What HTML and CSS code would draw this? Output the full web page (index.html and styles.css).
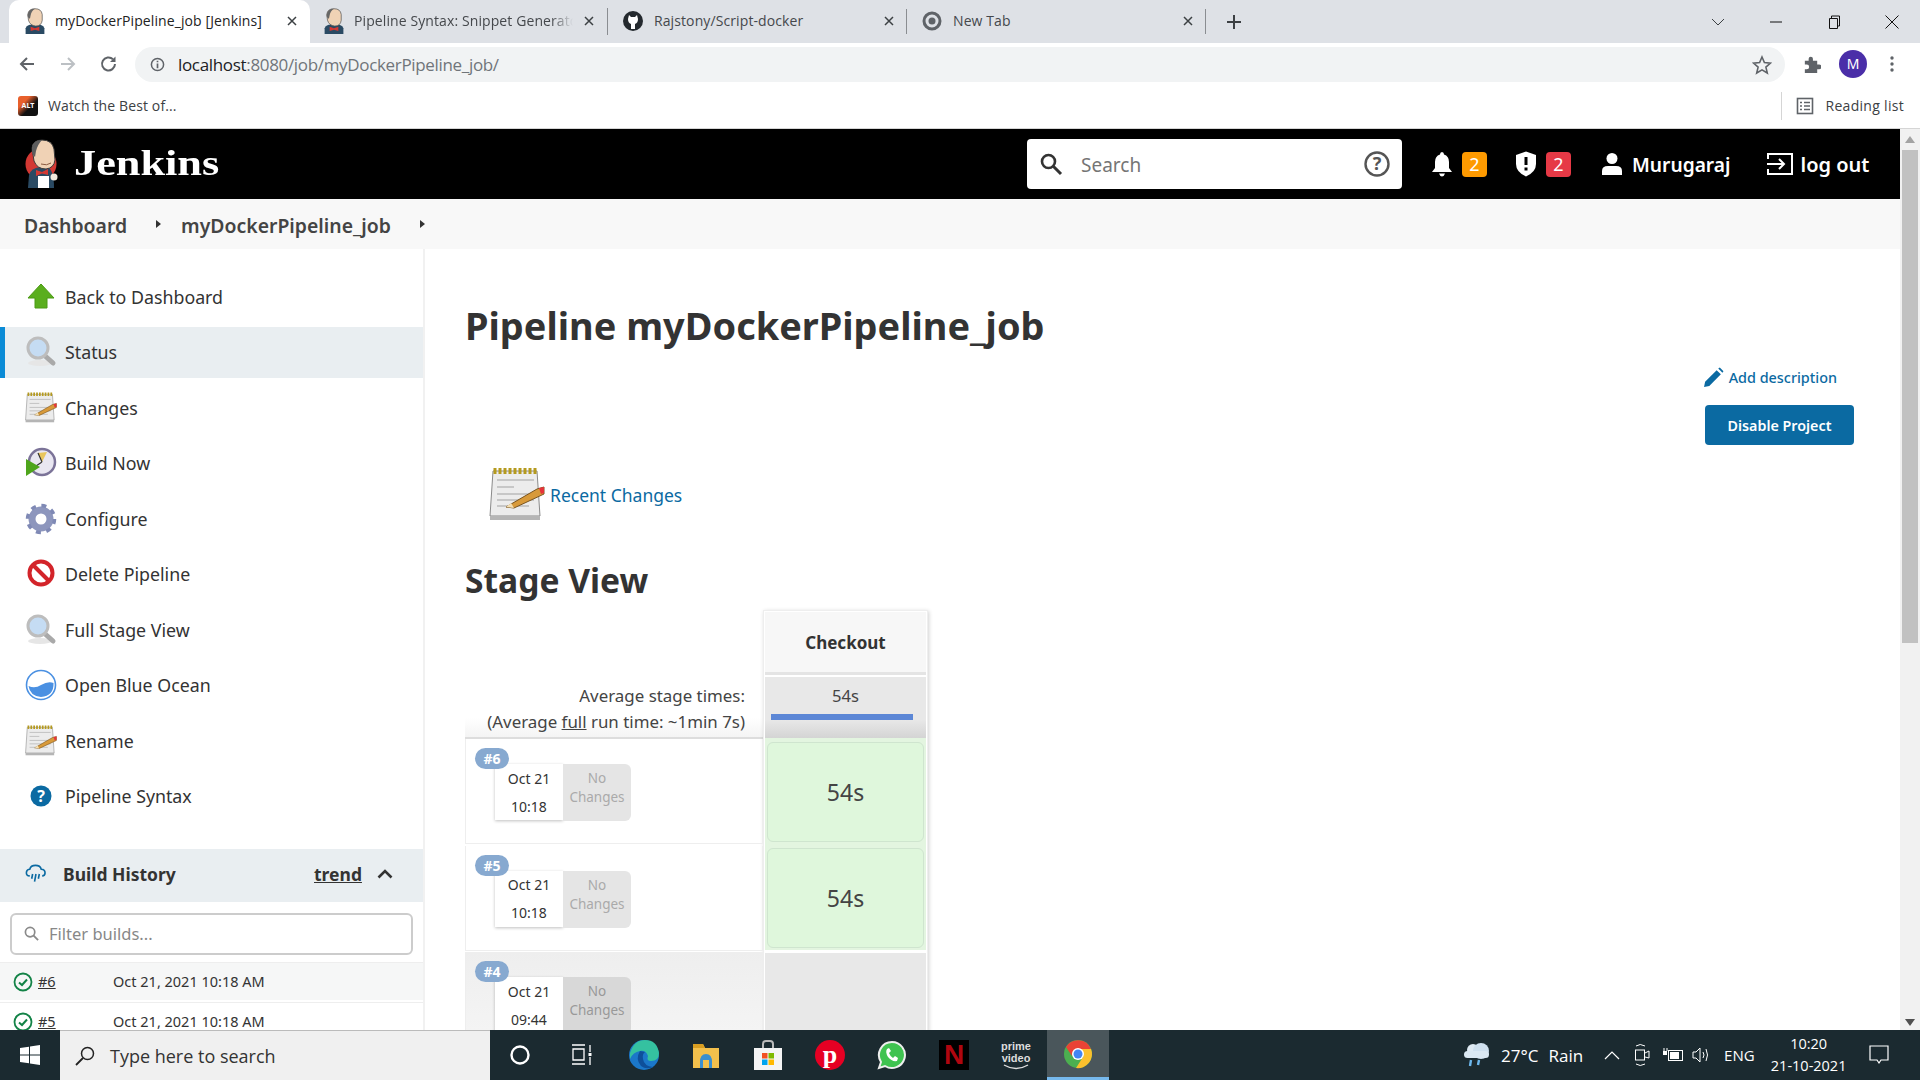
FILE: index.html
```html
<!DOCTYPE html>
<html lang="en">
<head>
    <meta charset="UTF-8">
    <title>myDockerPipeline_job [Jenkins]</title>
    <link rel="stylesheet" href="styles.css">
</head>
<body>

<svg class="defs" width="0" height="0">
    <symbol id="i-butler" viewBox="0 0 40 50">
        <circle cx="18" cy="25" r="15.5" fill="#d33833"/>
        <path d="M5 49 L6 36 Q8 29 17 28 L24 28 Q31 30 31 49Z" fill="#2a4a63"/>
        <path d="M9 9 Q10 1 19 1 Q29 1 31 10 L32 21 Q31 29 23 30 Q14 30 11 22Z" fill="#f0d2b5" stroke="#3a3a3a" stroke-width="1"/>
        <path d="M9 9 Q10 1 19 1 Q15 5 13 12 L12 18 Q8 15 9 9Z" fill="#5d5d5d"/>
        <path d="M18 25 Q24 27 28 24" fill="none" stroke="#8a5a40" stroke-width="1"/>
        <path d="M13 31 L19 33 L25 30 L25 36 L19 34.5 L13 37Z" fill="#d33833"/>
        <rect x="15" y="37" width="11" height="12" fill="#fff"/>
        <circle cx="31" cy="38" r="3.5" fill="#f1e8dc"/>
    </symbol>
    <symbol id="i-butler-small" viewBox="0 0 30 36">
        <path d="M2 36 V28 Q4 23 11 23 H19 Q26 23 28 28 V36Z" fill="#2a4a63"/>
        <path d="M5 9 Q6 1 15 1 Q24 1 25 9 L25 17 Q24 25 16 25 Q8 24 6 17Z" fill="#f0d2b5" stroke="#555" stroke-width="1"/>
        <path d="M5 9 Q6 1 15 1 Q10 4 9 10 L8 15 Q4 13 5 9Z" fill="#666"/>
        <path d="M9 26 L15 28 L21 26 V32 L15 30 L9 32Z" fill="#d33833"/>
    </symbol>
    <symbol id="i-notepad" viewBox="0 0 56 56">
        <path d="M4 4 H48 L51 49 H1Z" fill="#ececec" stroke="#8a8a8a"/>
        <rect x="1" y="49" width="50" height="4" fill="#b5b5b5"/>
        <path d="M6 1 V7 M11 1 V7 M16 1 V7 M21 1 V7 M26 1 V7 M31 1 V7 M36 1 V7 M41 1 V7 M46 1 V7" stroke="#b59a1e" stroke-width="3"/>
        <path d="M8 13 H45 M8 20 H25 M8 27 H45 M8 33 H45 M8 39 H40" stroke="#bbb" stroke-width="1.5"/>
        <path d="M17 40 L48 22 L55 20 L55 27 L25 41 Z" fill="#d89a3a" stroke="#7a5520" stroke-width="1"/>
        <path d="M17 40 L25 41 L22 36Z" fill="#f3dfb5"/>
        <path d="M50 21 L55 20 L55 26 L52 27Z" fill="#e6333a"/>
    </symbol>
    <symbol id="i-lens" viewBox="0 0 32 32">
        <ellipse cx="15" cy="27" rx="12" ry="3" fill="#e6e6e6"/>
        <path d="M19 19 L28 27" stroke="#a9a9a9" stroke-width="5" stroke-linecap="round"/>
        <circle cx="13" cy="12" r="10" fill="#c5dcf3" stroke="#bdbdbd" stroke-width="3"/>
    </symbol>
    <symbol id="i-check" viewBox="0 0 20 20">
        <circle cx="10" cy="10" r="8.5" fill="none" stroke="#138347" stroke-width="1.8"/>
        <path d="M6 10.5 L9 13 L14 7.5" fill="none" stroke="#138347" stroke-width="2"/>
    </symbol>
    <symbol id="i-x" viewBox="0 0 12 12">
        <path d="M2 2 L10 10 M10 2 L2 10" stroke="#3c4043" stroke-width="1.5"/>
    </symbol>
</svg>

<div class="tabstrip">
    <div class="tab tab-active">
        <svg class="tab-icon"><use href="#i-butler-small"/></svg>
        <span class="tab-title">myDockerPipeline_job [Jenkins]</span>
        <svg class="tab-close"><use href="#i-x"/></svg>
    </div>
    <div class="tab tab-second">
        <svg class="tab-icon"><use href="#i-butler-small"/></svg>
        <span class="tab-title tab-fade">Pipeline Syntax: Snippet Generator</span>
        <svg class="tab-close"><use href="#i-x"/></svg>
    </div>
    <div class="tab tab-sep">
        <svg class="tab-icon" viewBox="0 0 20 20"><circle cx="10" cy="10" r="10" fill="#24292e"/><path d="M6 4 L8 6 H12 L14 4 L15 8 Q15 12 12 13 L12 18 H8 L8 13 Q5 12 5 8Z" fill="#fff"/></svg>
        <span class="tab-title">Rajstony/Script-docker</span>
        <svg class="tab-close"><use href="#i-x"/></svg>
    </div>
    <div class="tab tab-sep">
        <svg class="tab-icon" viewBox="0 0 20 20"><circle cx="10" cy="10" r="8" fill="none" stroke="#5f6368" stroke-width="3"/><circle cx="10" cy="10" r="3.5" fill="#5f6368"/></svg>
        <span class="tab-title">New Tab</span>
        <svg class="tab-close"><use href="#i-x"/></svg>
    </div>
    <svg class="tab-new" viewBox="0 0 16 16"><path d="M8 1 V15 M1 8 H15" stroke="#3c4043" stroke-width="2"/></svg>
    <div class="win-controls">
        <svg class="win-btn" viewBox="0 0 14 14"><path d="M1 4 L7 10 L13 4" fill="none" stroke="#3c4043"/></svg>
        <svg class="win-btn" viewBox="0 0 14 14"><path d="M1 7 H13" stroke="#111"/></svg>
        <svg class="win-btn" viewBox="0 0 14 14"><path d="M2.5 3.5 H10.5 V13.5 H2.5Z M4.5 3 V1 H12.5 V11 H11" fill="none" stroke="#111"/></svg>
        <svg class="win-btn" viewBox="0 0 14 14"><path d="M0.5 0.5 L13.5 13.5 M13.5 0.5 L0.5 13.5" stroke="#111"/></svg>
    </div>
</div>

<div class="toolbar">
    <svg class="nav-btn" viewBox="0 0 18 18"><path d="M16 9 H3 M9 3 L3 9 L9 15" fill="none" stroke="#5f6368" stroke-width="2"/></svg>
    <svg class="nav-btn" viewBox="0 0 18 18"><path d="M2 9 H15 M9 3 L15 9 L9 15" fill="none" stroke="#bcc0c4" stroke-width="2"/></svg>
    <svg class="nav-btn" viewBox="0 0 18 18"><path d="M15 9 A6.5 6.5 0 1 1 13 4.2" fill="none" stroke="#5f6368" stroke-width="2"/><path d="M15.5 1.5 V7 H10Z" fill="#5f6368"/></svg>
    <div class="omnibox">
        <svg class="omni-info" viewBox="0 0 16 16"><circle cx="8" cy="8" r="6.5" fill="none" stroke="#5f6368" stroke-width="1.6"/><path d="M8 7 V12 M8 4 V5.6" stroke="#5f6368" stroke-width="1.8"/></svg>
        <span class="omni-url"><b>localhost</b>:8080/job/myDockerPipeline_job/</span>
        <svg class="omni-star" viewBox="0 0 20 20"><path d="M10 2 L12.4 7.6 L18.5 8.1 L13.9 12.1 L15.3 18 L10 14.9 L4.7 18 L6.1 12.1 L1.5 8.1 L7.6 7.6Z" fill="none" stroke="#5f6368" stroke-width="1.6"/></svg>
    </div>
    <svg class="ext-icon" viewBox="0 0 20 20"><path d="M3 6 H7 V4 A2.2 2.2 0 0 1 11.5 4 V6 H16 V10 H18 A2.2 2.2 0 0 1 18 15 H16 V19 H3 V15 H5 A2.3 2.3 0 0 0 5 10 H3Z" fill="#5f6368"/></svg>
    <span class="avatar">M</span>
    <svg class="menu-dots" viewBox="0 0 4 18"><circle cx="2" cy="3" r="1.7" fill="#5f6368"/><circle cx="2" cy="9" r="1.7" fill="#5f6368"/><circle cx="2" cy="15" r="1.7" fill="#5f6368"/></svg>
</div>

<div class="bookmarks">
    <span class="alt-icon">ALT</span>
    <span class="bookmark-label">Watch the Best of...</span>
    <span class="reading">
        <svg class="reading-icon" viewBox="0 0 18 18"><rect x="1.5" y="1.5" width="15" height="15" fill="none" stroke="#5f6368" stroke-width="1.6"/><path d="M4 5.5 H6 M8 5.5 H14 M4 9 H6 M8 9 H14 M4 12.5 H6 M8 12.5 H14" stroke="#5f6368" stroke-width="1.4"/></svg>
        Reading list
    </span>
</div>

<div class="viewport">
    <div class="page">
        <header class="jenkins-head">
            <svg class="butler"><use href="#i-butler"/></svg>
            <span class="brand"><span class="brand-text">Jenkins</span></span>
            <div class="search-box">
                <svg class="search-icon" viewBox="0 0 24 24"><circle cx="9.5" cy="9.5" r="6.5" fill="none" stroke="#333" stroke-width="2.6"/><path d="M14.5 14.5 L22 22" stroke="#333" stroke-width="3"/></svg>
                <span class="search-text">Search</span>
                <svg class="search-help" viewBox="0 0 26 26"><circle cx="13" cy="13" r="11.5" fill="none" stroke="#555" stroke-width="2.4"/><text x="13" y="19" text-anchor="middle" class="search-help-q">?</text></svg>
            </div>
            <svg class="head-icon bell" viewBox="0 0 22 26"><path d="M11 1 Q13 1 13 3.5 Q18 5 18 11 V17 L21 21 H1 L4 17 V11 Q4 5 9 3.5 Q9 1 11 1Z M8 22.5 H14 Q13 25.5 11 25.5 Q9 25.5 8 22.5Z" fill="#fff"/></svg>
            <span class="badge badge-warn">2</span>
            <svg class="head-icon shield" viewBox="0 0 22 26"><path d="M11 0.5 L21 4 V13 Q21 21 11 25.5 Q1 21 1 13 V4Z" fill="#fff"/><path d="M11 6 V14 M11 16.5 V19.5" stroke="#000" stroke-width="3"/></svg>
            <span class="badge badge-danger">2</span>
            <svg class="head-icon person" viewBox="0 0 22 24"><circle cx="11" cy="6.5" r="5.5" fill="#fff"/><path d="M1 23 V19 Q1 14 7 14 H15 Q21 14 21 19 V23Z" fill="#fff"/></svg>
            <span class="head-link user-link">Murugaraj</span>
            <svg class="head-icon logout" viewBox="0 0 28 24"><path d="M2 7 V2 H26 V22 H2 V17" fill="none" stroke="#fff" stroke-width="2"/><path d="M1 12 H18 M13 7 L18 12 L13 17" fill="none" stroke="#fff" stroke-width="2"/></svg>
            <span class="head-link logout-link">log out</span>
        </header>

        <nav class="breadcrumbs">
            <span class="crumb">Dashboard</span>
            <span class="crumb-arrow crumb-arrow-1"></span>
            <span class="crumb">myDockerPipeline_job</span>
            <span class="crumb-arrow"></span>
        </nav>

        <div class="columns">
            <aside class="sidebar">
                <ul class="side-tasks">
                    <li class="task">
                        <svg class="task-icon" viewBox="0 0 32 32"><path d="M16 3 L29 17 H22 V27 H10 V17 H3Z" fill="#5aae1e" stroke="#4b9a14" stroke-width="1"/></svg>
                        Back to Dashboard
                    </li>
                    <li class="task task-current">
                        <svg class="task-icon"><use href="#i-lens"/></svg>
                        Status
                    </li>
                    <li class="task">
                        <svg class="task-icon"><use href="#i-notepad"/></svg>
                        Changes
                    </li>
                    <li class="task">
                        <svg class="task-icon" viewBox="0 0 32 32"><circle cx="17" cy="15" r="13" fill="#e9e7f1" stroke="#7b7398" stroke-width="2.5"/><path d="M17 15 L13 6 L22 5Z" fill="#e9c65c"/><path d="M17 15 L13 6 M17 15 L11 19" stroke="#333" stroke-width="1.2"/><path d="M1 12 V29 L15 20Z" fill="#4ea51c"/></svg>
                        Build Now
                    </li>
                    <li class="task">
                        <svg class="task-icon" viewBox="0 0 32 32"><circle cx="16" cy="16" r="9" fill="none" stroke="#8d96bd" stroke-width="7"/><circle cx="16" cy="16" r="13.5" fill="none" stroke="#7f89b5" stroke-width="3.5" stroke-dasharray="5 5.6"/></svg>
                        Configure
                    </li>
                    <li class="task">
                        <svg class="task-icon" viewBox="0 0 32 32"><circle cx="16" cy="15" r="11.5" fill="#fff" stroke="#d3242a" stroke-width="4"/><path d="M8 7 L24 23" stroke="#d3242a" stroke-width="4"/></svg>
                        Delete Pipeline
                    </li>
                    <li class="task">
                        <svg class="task-icon"><use href="#i-lens"/></svg>
                        Full Stage View
                    </li>
                    <li class="task">
                        <svg class="task-icon" viewBox="0 0 32 32"><circle cx="16" cy="16" r="14.5" fill="#fff" stroke="#4a90e2" stroke-width="1.6"/><path d="M3.5 17 Q10 20 16 16 Q23 12 28.5 14 Q29 27 16 28 Q5 27 3.5 17Z" fill="#4a90e2"/></svg>
                        Open Blue Ocean
                    </li>
                    <li class="task">
                        <svg class="task-icon"><use href="#i-notepad"/></svg>
                        Rename
                    </li>
                    <li class="task">
                        <svg class="task-icon" viewBox="0 0 32 32"><circle cx="16" cy="16" r="10.5" fill="#0b6aa2"/><text x="16" y="21.5" text-anchor="middle" class="help-q">?</text></svg>
                        Pipeline Syntax
                    </li>
                </ul>

                <div class="history-head">
                    <svg class="history-icon" viewBox="0 0 22 20"><path d="M5 12 Q1 12 1.5 8 Q2 5 5 5 Q6 1 11 1 Q16 1 17 5 Q21 5 21 9 Q21 12 18 12" fill="none" stroke="#0b6aa2" stroke-width="1.7"/><path d="M8 10 L7 15 M11.5 10 L10 18 M15 10 L14 15" stroke="#0b6aa2" stroke-width="1.7"/></svg>
                    <span class="history-title">Build History</span>
                    <span class="history-trend">trend</span>
                    <svg class="history-chevron" viewBox="0 0 16 10"><path d="M1.5 8.5 L8 2 L14.5 8.5" fill="none" stroke="#333" stroke-width="2.6"/></svg>
                </div>
                <div class="history-filter">
                    <svg class="filter-icon" viewBox="0 0 16 16"><circle cx="6.5" cy="6.5" r="5" fill="none" stroke="#8a8a8a" stroke-width="1.8"/><path d="M10 10 L15 15" stroke="#8a8a8a" stroke-width="2"/></svg>
                    <span>Filter builds...</span>
                </div>
                <div class="build-row build-row-odd">
                    <svg class="build-status"><use href="#i-check"/></svg>
                    <span class="build-num">#6</span>
                    <span class="build-date">Oct 21, 2021 10:18 AM</span>
                </div>
                <div class="build-row">
                    <svg class="build-status"><use href="#i-check"/></svg>
                    <span class="build-num">#5</span>
                    <span class="build-date">Oct 21, 2021 10:18 AM</span>
                </div>
            </aside>

            <main class="content">
                <h1 class="job-title">Pipeline myDockerPipeline_job</h1>

                <div class="job-actions">
                    <span class="add-desc">
                        <svg class="add-desc-icon" viewBox="0 0 20 20"><path d="M1 19 L2 14 L13 3 L17 7 L6 18Z M14.5 1.5 L16 0.5 L19.5 4 L18.5 5.5Z" fill="#0b6aa2"/></svg>
                        Add description
                    </span>
                    <button class="btn-disable">Disable Project</button>
                </div>

                <div class="recent-changes">
                    <svg class="recent-icon"><use href="#i-notepad"/></svg>
                    <span class="recent-link">Recent Changes</span>
                </div>

                <h2 class="stage-title">Stage View</h2>

                <div class="stage">
                    <div class="stage-left">
                        <div class="stage-avg">
                            <div>Average stage times:</div>
                            <div>(Average <u>full</u> run time: ~1min 7s)</div>
                        </div>
                        <div class="run">
                            <span class="run-badge">#6</span>
                            <div class="run-date"><span>Oct 21</span><span>10:18</span></div>
                            <div class="run-changes">No Changes</div>
                        </div>
                        <div class="run">
                            <span class="run-badge">#5</span>
                            <div class="run-date"><span>Oct 21</span><span>10:18</span></div>
                            <div class="run-changes">No Changes</div>
                        </div>
                        <div class="run run-grey">
                            <span class="run-badge">#4</span>
                            <div class="run-date"><span>Oct 21</span><span>09:44</span></div>
                            <div class="run-changes">No Changes</div>
                        </div>
                    </div>
                    <div class="stage-col">
                        <div class="col-head">Checkout</div>
                        <div class="col-avg">
                            <span>54s</span>
                            <div class="col-bar"></div>
                        </div>
                        <div class="cell"><div class="cell-ok">54s</div></div>
                        <div class="cell"><div class="cell-ok">54s</div></div>
                        <div class="cell cell-empty"></div>
                    </div>
                </div>
            </main>
        </div>
    </div>

    <div class="scrollbar">
        <span class="scroll-up"></span>
        <div class="scroll-thumb"></div>
        <span class="scroll-down"></span>
    </div>
</div>

<footer class="taskbar">
    <div class="start">
        <svg class="start-logo" viewBox="0 0 20 20"><path d="M0 3 L9 1.7 V9.5 H0Z M10 1.5 L20 0 V9.5 H10Z M0 10.5 H9 V18.3 L0 17Z M10 10.5 H20 V20 L10 18.5Z" fill="#fff"/></svg>
    </div>
    <div class="task-search">
        <svg class="task-search-icon" viewBox="0 0 20 20"><circle cx="12.5" cy="7.5" r="6" fill="none" stroke="#222" stroke-width="1.5"/><path d="M8 12 L1 19" stroke="#222" stroke-width="1.8"/></svg>
        Type here to search
    </div>
    <div class="task-apps">
        <div class="app"><svg class="app-icon" viewBox="0 0 30 30"><circle cx="15" cy="15" r="8.5" fill="none" stroke="#fff" stroke-width="2.4"/></svg></div>
        <div class="app"><svg class="app-icon" viewBox="0 0 30 30"><path d="M5 5 H18 M5 24 H18 M6 9 H17 V20 H6Z M23 5 V12 M23 17 V25" fill="none" stroke="#fff" stroke-width="1.3"/><rect x="21.5" y="13" width="3" height="3" fill="#fff"/></svg></div>
        <div class="app"><svg class="app-icon app-icon-lg" viewBox="0 0 32 32"><circle cx="16" cy="16" r="15" fill="#1b77c9"/><path d="M2 14 Q6 1 17 1 Q29 1 31 14 Q31 22 23 22 Q18 22 20 17 Q18 11 12 12 Q5 13 2 20Z" fill="#35c1a0"/><path d="M12 12 Q7 20 13 27 Q18 31 25 28 Q16 27 15 20 Q14 15 17 13Z" fill="#0e4f9a"/></svg></div>
        <div class="app"><svg class="app-icon" viewBox="0 0 30 30"><path d="M2 4 H12 L14 8 H28 V28 H2Z" fill="#f3c04c"/><path d="M2 4 H12 L14 8 H2Z" fill="#d99e21"/><path d="M9 22 Q9 14 15 14 Q21 14 21 22 V28 H18 V20 H12 V28 H9Z" fill="#3a8fd1"/></svg></div>
        <div class="app"><svg class="app-icon" viewBox="0 0 30 30"><path d="M10 9 V4 Q10 1 13 1 H17 Q20 1 20 4 V9" fill="none" stroke="#bbb" stroke-width="2"/><path d="M1 8 H29 V30 H1Z" fill="#f4f4f4"/><rect x="9" y="13" width="5.5" height="5.5" fill="#f25022"/><rect x="15.5" y="13" width="5.5" height="5.5" fill="#7fba00"/><rect x="9" y="19.5" width="5.5" height="5.5" fill="#00a4ef"/><rect x="15.5" y="19.5" width="5.5" height="5.5" fill="#ffb900"/></svg></div>
        <div class="app"><svg class="app-icon" viewBox="0 0 30 30"><circle cx="15" cy="15" r="15" fill="#e60023"/><text x="15" y="23" text-anchor="middle" class="pin-p">p</text></svg></div>
        <div class="app"><svg class="app-icon" viewBox="0 0 30 30"><path d="M15 2 A13 13 0 1 1 8 26 L2 28 L4 22 A13 13 0 0 1 15 2Z" fill="#3fc350" stroke="#eee" stroke-width="2"/><path d="M10 9 Q8 12 11 17 Q15 22 20 21 L21 18 L18 16 L16 18 Q13 16 12 13 L14 11 L12 8Z" fill="#fff"/></svg></div>
        <div class="app"><span class="netflix">N</span></div>
        <div class="app prime">
            <span>prime<br>video</span>
            <svg class="prime-smile" viewBox="0 0 26 6"><path d="M1 1 Q13 8 25 1" fill="none" stroke="#ddd" stroke-width="1.4"/></svg>
        </div>
        <div class="app app-active"><svg class="app-icon" viewBox="0 0 30 30"><circle cx="15" cy="15" r="14" fill="#4caf50"/><path d="M3 8 A14 14 0 0 1 28 10 H15 A6 6 0 0 0 9 17Z" fill="#ea4335"/><path d="M28 10 A14 14 0 0 1 13 29 L20 18 A6 6 0 0 0 15 10Z" fill="#fbc02d"/><circle cx="15" cy="15" r="6" fill="#fff"/><circle cx="15" cy="15" r="4.5" fill="#4285f4"/></svg></div>
    </div>
    <div class="tray">
        <svg class="tray-weather" viewBox="0 0 30 28"><circle cx="12" cy="9" r="6" fill="#dfeaf3"/><circle cx="20" cy="10" r="8" fill="#cfe0ee"/><rect x="3" y="10" width="25" height="7" rx="3.5" fill="#dbe8f2"/><path d="M10 19 L9 25 M18 19 L17 24" stroke="#6db8ee" stroke-width="2.4"/></svg>
        <span class="tray-temp">27°C</span>
        <span class="tray-rain">Rain</span>
        <svg class="tray-up" viewBox="0 0 16 10"><path d="M1 9 L8 2 L15 9" fill="none" stroke="#fff" stroke-width="1.2"/></svg>
        <svg class="tray-cam" viewBox="0 0 16 24"><path d="M2 3 Q6 0 11 3 M2 21 Q6 24 11 21" fill="none" stroke="#fff"/><rect x="1.5" y="7" width="9" height="10" fill="none" stroke="#fff"/><path d="M11 10 L15 8 V15 L11 14" fill="none" stroke="#fff"/></svg>
        <svg class="tray-batt" viewBox="0 0 22 16"><path d="M2 1 V4 M5 1 V4" stroke="#fff"/><rect x="1" y="4" width="4" height="4" fill="#fff"/><rect x="6.5" y="3.5" width="14" height="10" fill="none" stroke="#fff"/><rect x="8" y="5" width="9" height="7" fill="#fff"/></svg>
        <svg class="tray-vol" viewBox="0 0 20 18"><path d="M2 6 H5 L9 2 V16 L5 12 H2Z" fill="none" stroke="#fff"/><path d="M12 6 Q14 9 12 12 M15 3 Q18 9 15 15" fill="none" stroke="#fff"/></svg>
        <span class="tray-lang">ENG</span>
        <div class="tray-clock"><span>10:20</span><span>21-10-2021</span></div>
        <svg class="tray-notif" viewBox="0 0 20 20"><path d="M1 1 H19 V15 H12 L10 18 L8 15 H1Z" fill="none" stroke="#fff" stroke-width="1.2"/></svg>
    </div>
</footer>

</body>
</html>
```

FILE: styles.css
```css
* {
    box-sizing: border-box;
}
html, body {
    margin: 0;
    height: 100%;
}
body {
    width: 1920px;
    height: 1080px;
    overflow: hidden;
    display: flex;
    flex-direction: column;
    font-family: "Noto Sans", sans-serif;
    color: #333;
    background-color: white;
}
.defs {
    position: absolute;
}

/* browser chrome */
.tabstrip {
    height: 43px;
    flex: none;
    display: flex;
    align-items: stretch;
    padding-left: 9px;
    background-color: #dee1e6;
}
.tab {
    width: 299px;
    display: flex;
    align-items: center;
    padding: 0 12px 2px 15px;
    position: relative;
    font-family: "Open Sans", sans-serif;
    font-size: 14px;
    letter-spacing: 0.1px;
    color: #45484c;
}
.tab-active {
    width: 301px;
    background-color: white;
    border-radius: 10px 10px 0 0;
    color: #222;
}
.tab-second {
    width: 298px;
    padding-left: 13px;
    border-right: 1px solid #8a8d91;
    border-image: linear-gradient(transparent 9px, #8a8d91 9px, #8a8d91 34px, transparent 34px) 1;
}
.tab-sep::after {
    content: "";
    position: absolute;
    right: 0;
    top: 9px;
    bottom: 9px;
    width: 1px;
    background-color: #8a8d91;
}
.tab-icon {
    width: 22px;
    height: 26px;
    flex: none;
    margin-right: 9px;
}
.tab-sep .tab-icon {
    width: 20px;
    height: 20px;
    margin-right: 11px;
}
.tab-title {
    flex: 1;
    min-width: 0;
    overflow: hidden;
    white-space: nowrap;
}
.tab-fade {
    -webkit-mask-image: linear-gradient(to right, black 90%, transparent);
    mask-image: linear-gradient(to right, black 90%, transparent);
}
.tab-close {
    width: 12px;
    height: 12px;
    flex: none;
    margin-left: 10px;
}
.tab-new {
    width: 16px;
    height: 16px;
    align-self: center;
    margin-left: 20px;
}
.win-controls {
    margin-left: auto;
    display: flex;
    align-items: center;
    gap: 44px;
    padding-right: 21px;
}
.win-btn {
    width: 14px;
    height: 14px;
}
.toolbar {
    height: 42px;
    flex: none;
    display: flex;
    align-items: center;
    padding-left: 18px;
}
.nav-btn {
    width: 18px;
    height: 18px;
    margin-right: 23px;
}
.omnibox {
    width: 1650px;
    height: 35px;
    margin-left: -6px;
    display: flex;
    align-items: center;
    padding: 1px 13px 0 15px;
    border-radius: 18px;
    background-color: #f1f3f4;
    font-family: "Open Sans", sans-serif;
    font-size: 17px;
    letter-spacing: -0.33px;
    color: #70757a;
}
.omni-url b {
    font-weight: normal;
    color: #202124;
}
.omni-info {
    width: 15px;
    height: 15px;
    margin-right: 13px;
}
.omni-star {
    width: 20px;
    height: 20px;
    margin-left: auto;
}
.ext-icon {
    width: 19px;
    height: 19px;
    margin-left: 17px;
}
.avatar {
    width: 28px;
    height: 28px;
    margin-left: 18px;
    border-radius: 50%;
    background-color: #4a2ea8;
    color: white;
    font-size: 14px;
    line-height: 28px;
    text-align: center;
}
.menu-dots {
    width: 4px;
    height: 18px;
    margin-left: 23px;
}
.bookmarks {
    height: 44px;
    flex: none;
    display: flex;
    align-items: center;
    padding: 0 0 2px 18px;
    border-bottom: 1px solid #d5d5d5;
    font-family: "Open Sans", sans-serif;
    font-size: 14px;
    letter-spacing: 0.13px;
    color: #3c4043;
}
.alt-icon {
    width: 20px;
    height: 20px;
    border-radius: 3px;
    background: linear-gradient(135deg, #e8602c 30%, #111 60%);
    color: white;
    font-size: 7px;
    font-weight: bold;
    letter-spacing: 0;
    line-height: 20px;
    text-align: center;
}
.bookmark-label {
    margin-left: 10px;
}
.reading {
    margin-left: auto;
    display: flex;
    align-items: center;
    height: 28px;
    padding: 0 16px 0 14px;
    border-left: 1px solid #d5d5d5;
    letter-spacing: 0.3px;
}
.reading-icon {
    width: 18px;
    height: 18px;
    margin-right: 11px;
}

/* page + scrollbar */
.viewport {
    flex: 1;
    min-height: 0;
    display: flex;
}
.page {
    flex: 1;
    min-width: 0;
    display: flex;
    flex-direction: column;
}
.scrollbar {
    width: 20px;
    flex: none;
    display: flex;
    flex-direction: column;
    align-items: center;
    background-color: #f1f1f1;
}
.scroll-up, .scroll-down {
    width: 0;
    height: 0;
    flex: none;
    border-left: 5px solid transparent;
    border-right: 5px solid transparent;
}
.scroll-up {
    margin: 7px 0 5px;
    border-bottom: 7px solid #a3a3a3;
}
.scroll-thumb {
    width: 16px;
    height: 493px;
    margin-top: 2px;
    background-color: #c1c1c1;
}
.scroll-down {
    margin-top: auto;
    margin-bottom: 4px;
    border-top: 7px solid #505050;
}

/* jenkins header */
.jenkins-head {
    height: 70px;
    flex: none;
    display: flex;
    align-items: center;
    background-color: black;
    color: white;
}
.butler {
    width: 40px;
    height: 50px;
    margin-left: 23px;
}
.brand {
    width: 148px;
    margin-left: 11px;
    padding-bottom: 3px;
    font-family: "Liberation Serif", serif;
    font-size: 36px;
    font-weight: bold;
    white-space: nowrap;
}
.brand-text {
    display: inline-block;
    transform: scaleX(1.23);
    transform-origin: left center;
}
.search-box {
    width: 375px;
    height: 50px;
    margin-left: 805px;
    display: flex;
    align-items: center;
    padding: 0 12px;
    border-radius: 4px;
    background-color: white;
}
.search-icon {
    width: 24px;
    height: 24px;
}
.search-text {
    margin: 2px 0 0 18px;
    font-size: 19px;
    color: #757575;
}
.search-help {
    width: 26px;
    height: 26px;
    margin-left: auto;
}
.search-help-q {
    font-family: "Noto Sans", sans-serif;
    font-size: 18px;
    font-weight: bold;
    fill: #555;
}
.head-icon {
    flex: none;
}
.bell {
    width: 22px;
    height: 26px;
    margin-left: 29px;
}
.badge {
    width: 25px;
    height: 25px;
    border-radius: 4px;
    color: white;
    font-size: 18px;
    line-height: 25px;
    text-align: center;
    margin-left: 9px;
}
.badge-warn {
    background-color: #fe9a00;
}
.badge-danger {
    background-color: #e63946;
}
.shield {
    width: 22px;
    height: 26px;
    margin-left: 28px;
}
.person {
    width: 22px;
    height: 24px;
    margin-left: 30px;
}
.head-link {
    font-size: 20px;
    font-weight: 600;
}
.user-link {
    margin-left: 9px;
    font-size: 19.2px;
}
.logout {
    width: 28px;
    height: 24px;
    margin-left: 36px;
}
.logout-link {
    margin-left: 6px;
}
.breadcrumbs {
    height: 50px;
    flex: none;
    display: flex;
    align-items: center;
    padding: 2px 0 0 24px;
    background-color: #f8f8f8;
    font-size: 19.4px;
    font-weight: 600;
    color: #444;
}
.crumb-arrow {
    width: 0;
    height: 0;
    margin: -3px 0 0 29px;
    border-top: 4px solid transparent;
    border-bottom: 4px solid transparent;
    border-left: 5px solid #333;
}
.crumb-arrow-1 {
    margin-left: 29px;
    margin-right: 20px;
}

/* sidebar */
.columns {
    flex: 1;
    min-height: 0;
    display: flex;
    overflow: hidden;
}
.sidebar {
    width: 425px;
    flex: none;
    border-right: 2px solid #f1f1f1;
}
.side-tasks {
    list-style: none;
    margin: 0 0 27px;
    padding: 22px 0 0;
}
.task {
    height: 51px;
    margin-bottom: 4.5px;
    display: flex;
    align-items: center;
    padding-left: 25px;
    font-size: 17.8px;
    color: #333;
}
.task-current {
    padding-left: 20px;
    border-left: 5px solid #0b8bd6;
    background-color: #e9eef1;
}
.task-icon {
    width: 32px;
    height: 32px;
    flex: none;
    margin-right: 8px;
}
.help-q {
    font-family: "Noto Sans", sans-serif;
    font-size: 16px;
    font-weight: bold;
    fill: white;
}
.history-head {
    height: 53px;
    display: flex;
    align-items: center;
    padding: 0 0 3px 25px;
    background-color: #e9eef1;
    font-size: 17.5px;
    font-weight: bold;
}
.history-icon {
    width: 21px;
    height: 20px;
}
.history-title {
    margin-left: 17px;
    width: 251px;
}
.history-trend {
    width: 63px;
    text-decoration: underline;
}
.history-chevron {
    width: 16px;
    height: 10px;
}
.history-filter {
    height: 42px;
    margin: 11px 10px 7px;
    display: flex;
    align-items: center;
    padding-left: 12px;
    border: 2px solid #ccc;
    border-radius: 6px;
    font-size: 16.5px;
    color: #888;
}
.filter-icon {
    width: 15px;
    height: 15px;
    margin-right: 10px;
}
.build-row {
    height: 38px;
    margin-bottom: 2px;
    display: flex;
    align-items: center;
    padding-left: 13px;
    border-top: 1px solid #eee;
    font-size: 14.5px;
}
.build-row-odd {
    background-color: #f6f7f7;
}
.build-status {
    width: 20px;
    height: 20px;
    margin: 2px 5px 0 0;
}
.build-num {
    width: 75px;
    text-decoration: underline;
}

/* main column */
.content {
    flex: 1;
    min-width: 0;
    padding: 51px 46px 0 40px;
}
.job-title {
    height: 50px;
    margin: 0;
    font-size: 37.9px;
    font-weight: 700;
    line-height: 50px;
}
.job-actions {
    margin-top: 16px;
    display: flex;
    flex-direction: column;
    align-items: flex-end;
}
.add-desc {
    height: 22px;
    display: flex;
    align-items: center;
    padding-right: 17px;
    font-size: 14.4px;
    font-weight: 500;
    color: #0b6aa2;
}
.add-desc-icon {
    width: 21px;
    height: 21px;
    margin-right: 5px;
}
.btn-disable {
    width: 149px;
    height: 40px;
    margin-top: 17px;
    border: none;
    border-radius: 4px;
    background-color: #0b6aa2;
    color: white;
    font-family: "Noto Sans", sans-serif;
    font-size: 14.3px;
    font-weight: 600;
}
.recent-changes {
    margin: 22px 0 0 24px;
    display: flex;
    align-items: center;
    height: 55px;
}
.recent-icon {
    width: 56px;
    height: 56px;
}
.recent-link {
    margin-left: 5px;
    font-size: 17.5px;
    color: #0b6aa2;
}
.stage-title {
    height: 44px;
    margin: 36px 0 8px;
    font-size: 33.6px;
    font-weight: 700;
    line-height: 44px;
}

/* stage view */
.stage {
    display: flex;
    align-items: flex-start;
    font-size: 16.9px;
}
.stage-left {
    width: 298px;
    flex: none;
}
.stage-avg {
    height: 129px;
    display: flex;
    flex-direction: column;
    justify-content: flex-end;
    padding: 0 18px 2px 0;
    border-bottom: 2px solid #ddd;
    background: linear-gradient(white 85%, #f4f4f4);
    line-height: 26px;
    text-align: right;
    color: #444;
}
.run {
    height: 105px;
    margin-bottom: 1.5px;
    display: flex;
    align-items: flex-start;
    position: relative;
    padding: 25px 0 0 29px;
    border: 1px solid #eee;
    border-top: 0;
}
.run-grey {
    background: linear-gradient(#eee, #f6f6f6);
}
.run-badge {
    position: absolute;
    left: 9px;
    top: 9px;
    width: 34px;
    height: 21px;
    border-radius: 11px;
    background-color: #87a9d0;
    color: white;
    font-size: 14px;
    font-weight: bold;
    line-height: 21px;
    text-align: center;
}
.run-date {
    width: 68px;
    height: 56px;
    display: flex;
    flex-direction: column;
    align-items: center;
    justify-content: space-around;
    background-color: white;
    box-shadow: 0 1px 3px rgba(0, 0, 0, 0.25);
    font-size: 14px;
    color: #333;
}
.run-changes {
    width: 68px;
    height: 57px;
    padding: 5px 4px;
    border-radius: 0 6px 6px 0;
    background-color: #e5e5e5;
    font-size: 13.5px;
    line-height: 19px;
    text-align: center;
    color: #aaa;
}
.run-grey .run-changes {
    background-color: #d8d8d8;
    color: #999;
}
.stage-col {
    width: 165px;
    flex: none;
    padding: 1px 1px 0;
    border: 1px solid #eee;
    border-bottom: 0;
    box-shadow: 1px 1px 4px rgba(0, 0, 0, 0.18);
}
.col-head {
    height: 63px;
    border-bottom: 3px solid #e4e4e4;
    background-color: #f7f7f7;
    font-size: 17px;
    font-weight: bold;
    line-height: 61px;
    text-align: center;
}
.col-avg {
    height: 61px;
    display: flex;
    flex-direction: column;
    align-items: center;
    margin-top: 2px;
    padding-top: 7px;
    background: linear-gradient(#e8e8e8 70%, #d4d4d4);
    font-size: 16.6px;
    color: #444;
}
.col-bar {
    width: 142px;
    height: 6px;
    margin: 7px 0 0 -8px;
    background-color: #5c87d6;
}
.cell {
    height: 106px;
    padding: 4px 2px 0;
    background-color: #e3f5e0;
}
.cell-ok {
    height: 100px;
    border: 1px solid #cfe5cf;
    border-radius: 6px;
    background-color: #dff7dc;
    font-size: 23px;
    line-height: 98px;
    text-align: center;
    color: #444;
}
.cell-empty {
    margin-top: 3px;
    background-color: #e8e8e8;
}

/* windows taskbar */
.taskbar {
    height: 50px;
    flex: none;
    display: flex;
    align-items: stretch;
    background-color: #1b2a30;
    color: white;
}
.start {
    width: 60px;
    display: flex;
    align-items: center;
    justify-content: center;
}
.start-logo {
    width: 20px;
    height: 20px;
}
.task-search {
    width: 430px;
    display: flex;
    align-items: center;
    padding-left: 15px;
    border-top: 1px solid #bbb;
    background-color: #f0f0f0;
    font-family: "Open Sans", sans-serif;
    font-size: 18px;
    color: #333;
}
.task-search-icon {
    width: 20px;
    height: 20px;
    margin-right: 15px;
}
.task-apps {
    display: flex;
    margin-left: -1px;
}
.app {
    width: 62px;
    display: flex;
    align-items: center;
    justify-content: center;
}
.app-active {
    background-color: #4a565b;
    border-bottom: 3px solid #76b9ed;
}
.app-icon {
    width: 30px;
    height: 30px;
}
.app-icon-lg {
    width: 32px;
    height: 32px;
}
.pin-p {
    font-family: "Liberation Serif", serif;
    font-size: 26px;
    font-weight: bold;
    fill: white;
}
.netflix {
    width: 30px;
    height: 30px;
    background-color: black;
    color: #b0060f;
    font-family: "Liberation Sans", sans-serif;
    font-size: 28px;
    font-weight: bold;
    line-height: 30px;
    text-align: center;
}
.prime {
    flex-direction: column;
    font-family: "Liberation Sans", sans-serif;
    font-size: 11px;
    font-weight: bold;
    line-height: 12px;
    text-align: center;
    color: #ddd;
}
.prime-smile {
    width: 26px;
    height: 6px;
}
.tray {
    flex: 1;
    display: flex;
    align-items: center;
    font-family: "Open Sans", sans-serif;
    font-size: 17px;
}
.tray-weather {
    width: 30px;
    height: 28px;
    margin-left: 352px;
}
.tray-temp {
    margin-left: 10px;
}
.tray-rain {
    margin-left: 10px;
}
.tray-up {
    width: 16px;
    height: 10px;
    margin-left: 21px;
}
.tray-cam {
    width: 16px;
    height: 24px;
    margin-left: 14px;
}
.tray-batt {
    width: 22px;
    height: 16px;
    margin-left: 12px;
}
.tray-vol {
    width: 20px;
    height: 18px;
    margin-left: 7px;
}
.tray-lang {
    margin-left: 13px;
    font-size: 15px;
}
.tray-clock {
    width: 78px;
    margin-left: 15px;
    display: flex;
    flex-direction: column;
    align-items: center;
    gap: 4px;
    font-size: 14.5px;
    line-height: 18px;
}
.tray-notif {
    width: 20px;
    height: 20px;
    margin-left: 21px;
}
```
